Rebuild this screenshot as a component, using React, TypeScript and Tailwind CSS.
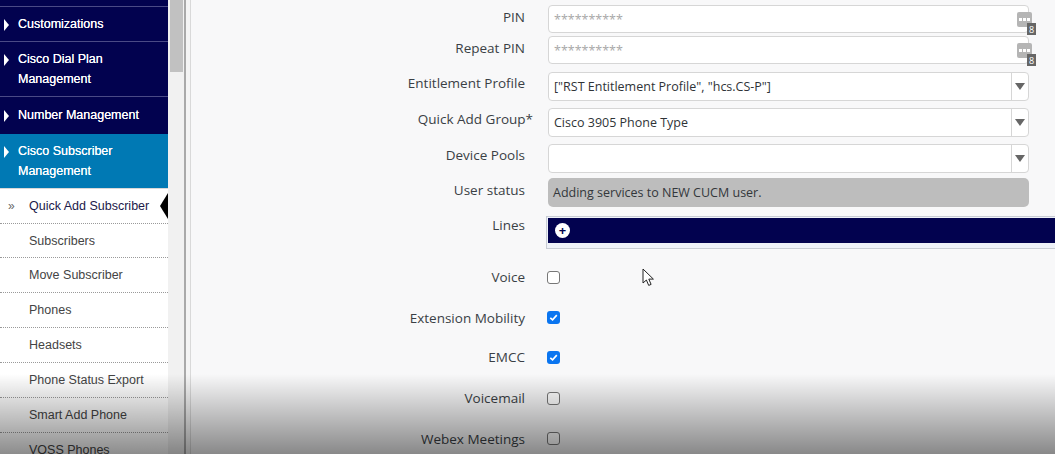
const menuItems = [
  { label: "Quick Add Subscriber", h: "h-[35px]", active: true },
  { label: "Subscribers", h: "h-[34px] pt-[2px]" },
  { label: "Move Subscriber", h: "h-[35px]" },
  { label: "Phones", h: "h-[35px]" },
  { label: "Headsets", h: "h-[35px]" },
  { label: "Phone Status Export", h: "h-[35px]" },
  { label: "Smart Add Phone", h: "h-[35px]" },
  { label: "VOSS Phones", h: "h-[35px]" },
];

function Caret() {
  return <span className="mt-[4px] mr-[9px] h-0 w-0 shrink-0 border-y-[6px] border-l-[5px] border-y-transparent border-l-white" />;
}

function NavGroup({ lines, className }: { lines: string[]; className: string }) {
  return (
    <div className={`flex items-start pl-[4px] text-[12.5px] leading-[19.5px] text-white [text-shadow:0_0_0.6px_white] ${className}`}>
      <Caret />
      <div>
        {lines.map((l) => (
          <div key={l}>{l}</div>
        ))}
      </div>
    </div>
  );
}

function Sidebar() {
  return (
    <div className="w-[168px] shrink-0 overflow-hidden bg-white font-['Liberation_Sans',sans-serif]">
      <div className="h-[7px] border-b border-[#4a4a86] bg-[#02024f]" />
      <NavGroup lines={["Customizations"]} className="h-[35px] border-b border-[#4a4a86] bg-[#02024f] pt-[8px]" />
      <NavGroup lines={["Cisco Dial Plan", "Management"]} className="h-[55px] border-b border-[#4a4a86] bg-[#02024f] pt-[8px]" />
      <NavGroup lines={["Number Management"]} className="h-[37px] bg-[#02024f] pt-[9px]" />
      <NavGroup lines={["Cisco Subscriber", "Management"]} className="h-[54px] bg-[#0079b4] pt-[8px]" />
      <div className="h-[1px] bg-[#d8d8d8]" />
      {menuItems.map((m) => (
        <div
          key={m.label}
          className={`relative flex items-center border-b border-dotted border-[#9a9a9a] pl-[29px] text-[12.5px] ${m.h} ${m.active ? "text-[#1c1a4a]" : "text-[#444444]"}`}
        >
          {m.active && <span className="absolute left-[8px] text-[12px] text-[#666666]">»</span>}
          {m.label}
          {m.active && (
            <span className="absolute right-0 top-[4px] h-0 w-0 border-y-[13px] border-r-[8px] border-y-transparent border-r-black" />
          )}
        </div>
      ))}
    </div>
  );
}

function Row({ label, className, labelClass = "", children }: { label: React.ReactNode; className: string; labelClass?: string; children: React.ReactNode }) {
  return (
    <div className={`flex ${className}`}>
      <div className={`w-[335px] shrink-0 pr-[1px] text-right text-[#3a3f45] ${labelClass}`}>{label}</div>
      <div className="ml-[22px] min-w-0 flex-1">{children}</div>
    </div>
  );
}

function PinInput() {
  return (
    <div className="relative flex h-[28px] w-[481px] items-center rounded-[4px] border border-[#d6d6d6] bg-white pl-[5px] text-[12.5px] text-[#a8a8a8]">
      **********
      <span className="absolute right-[-4px] top-[6px] flex h-[15px] w-[15px] items-center justify-center gap-[1px] rounded-[2px] bg-[#b5b5b5]">
        <span className="h-[3px] w-[3px] bg-white" />
        <span className="h-[3px] w-[3px] bg-white" />
        <span className="h-[3px] w-[3px] bg-white" />
      </span>
      <span className="absolute right-[-8px] top-[17px] flex h-[12px] w-[9px] items-center justify-center bg-[#666666] text-[9px] leading-none text-white">
        8
      </span>
    </div>
  );
}

function Select({ value }: { value?: string }) {
  return (
    <div className="flex h-[29px] w-[481px] items-center rounded-[4px] border border-[#d6d6d6] bg-white pl-[5px] text-[12.5px] text-[#2f3337]">
      <span className="flex-1">{value}</span>
      <span className="flex h-full w-[17px] items-center justify-center border-l border-[#d6d6d6]">
        <span className="h-0 w-0 border-x-[5px] border-t-[7px] border-x-transparent border-t-[#666666]" />
      </span>
    </div>
  );
}

function Check({ on }: { on?: boolean }) {
  if (on) {
    return (
      <span className="-ml-[1px] flex h-[13px] w-[13px] items-center justify-center rounded-[3px] bg-[#0a75f0]">
        <svg viewBox="0 0 12 12" className="h-[11px] w-[11px]">
          <path d="M2.5 6.3 5 8.6 9.6 3.4" fill="none" stroke="white" strokeWidth="1.8" />
        </svg>
      </span>
    );
  }
  return <span className="-ml-[1px] block h-[13px] w-[13px] rounded-[3px] border border-[#777777] bg-white" />;
}

export default function App() {
  return (
    <div className="relative flex h-[454px] w-[1055px] overflow-hidden bg-[#f8f8f9]">
      <Sidebar />
      {/* scrollbar */}
      <div className="w-[16px] shrink-0 bg-[#f1f1f1] pl-[2px]">
        <div className="h-[72px] w-[13px] bg-[#c1c1c1]" />
      </div>
      <div className="w-[2px] shrink-0 bg-[#a9a9a9]" />
      <div className="w-[4px] shrink-0 bg-[#f4f4f4]" />
      <div className="w-[1px] shrink-0 bg-[#d9d9d9]" />

      <div className="min-w-0 flex-1 pt-[5px] font-['Open_Sans',sans-serif] text-[13.5px] leading-[19px]">
        <Row label="PIN" className="mb-[3px] h-[28px] pt-[3px]">
          <div className="-mt-[3px]"><PinInput /></div>
        </Row>
        <Row label="Repeat PIN" className="mb-[8px] h-[28px] pt-[3px]">
          <div className="-mt-[3px]"><PinInput /></div>
        </Row>
        <Row label="Entitlement Profile" className="mb-[7px] h-[29px] pt-[2px]">
          <div className="-mt-[2px]"><Select value={'["RST Entitlement Profile", "hcs.CS-P"]'} /></div>
        </Row>
        <Row
          label={<>Quick Add Group<span className="-mr-[8px]">*</span></>}
          className="mb-[7px] h-[29px] pt-[2px]"
        >
          <div className="-mt-[2px]"><Select value="Cisco 3905 Phone Type" /></div>
        </Row>
        <Row label="Device Pools" className="mb-[6px] h-[28px] pt-[2px]">
          <div className="-mt-[2px]"><Select /></div>
        </Row>
        <Row label="User status" className="mb-[9px] h-[29px] pt-[3px]">
          <div className="-mt-[3px] flex h-[29px] w-[481px] items-center rounded-[5px] bg-[#bdbdbd] pl-[5px] text-[12.5px] text-[#33373b]">
            Adding services to NEW CUCM user.
          </div>
        </Row>
        <Row label="Lines" className="h-[33px]">
          <div className="-ml-[2px] h-[33px] border border-r-0 border-[#c8ccd4] bg-[#eef1f8] pl-[1px] pt-[1px]">
            <div className="flex h-[25px] items-center bg-[#02024f] pl-[7px]">
              <span className="flex h-[15px] w-[15px] items-center justify-center rounded-full bg-white text-[13px] font-bold leading-none text-[#02024f]">
                +
              </span>
            </div>
          </div>
        </Row>
        <Row label="Voice" className="mt-[19px] h-[19px] items-center">
          <Check />
        </Row>
        <Row label="Extension Mobility" labelClass="pt-[2px]" className="mt-[21px] h-[19px] items-center">
          <Check on />
        </Row>
        <Row label="EMCC" className="mt-[21px] h-[19px] items-center">
          <Check on />
        </Row>
        <Row label="Voicemail" className="mt-[22px] h-[19px] items-center">
          <Check />
        </Row>
        <Row label="Webex Meetings" labelClass="pt-[2px]" className="mt-[21px] h-[19px] items-center">
          <Check />
        </Row>
      </div>

      {/* mouse pointer */}
      <svg viewBox="0 0 14 20" className="absolute left-[642px] top-[268px] h-[20px] w-[14px]">
        <path d="M1 1v14l3.4-3 2.3 5.4 2.4-1-2.3-5.3h4.6z" fill="white" stroke="#222222" strokeWidth="1" />
      </svg>
      {/* video player shade */}
      <div className="pointer-events-none absolute bottom-0 left-0 h-[80px] w-full bg-gradient-to-b from-black/0 to-black/45" />
    </div>
  );
}
